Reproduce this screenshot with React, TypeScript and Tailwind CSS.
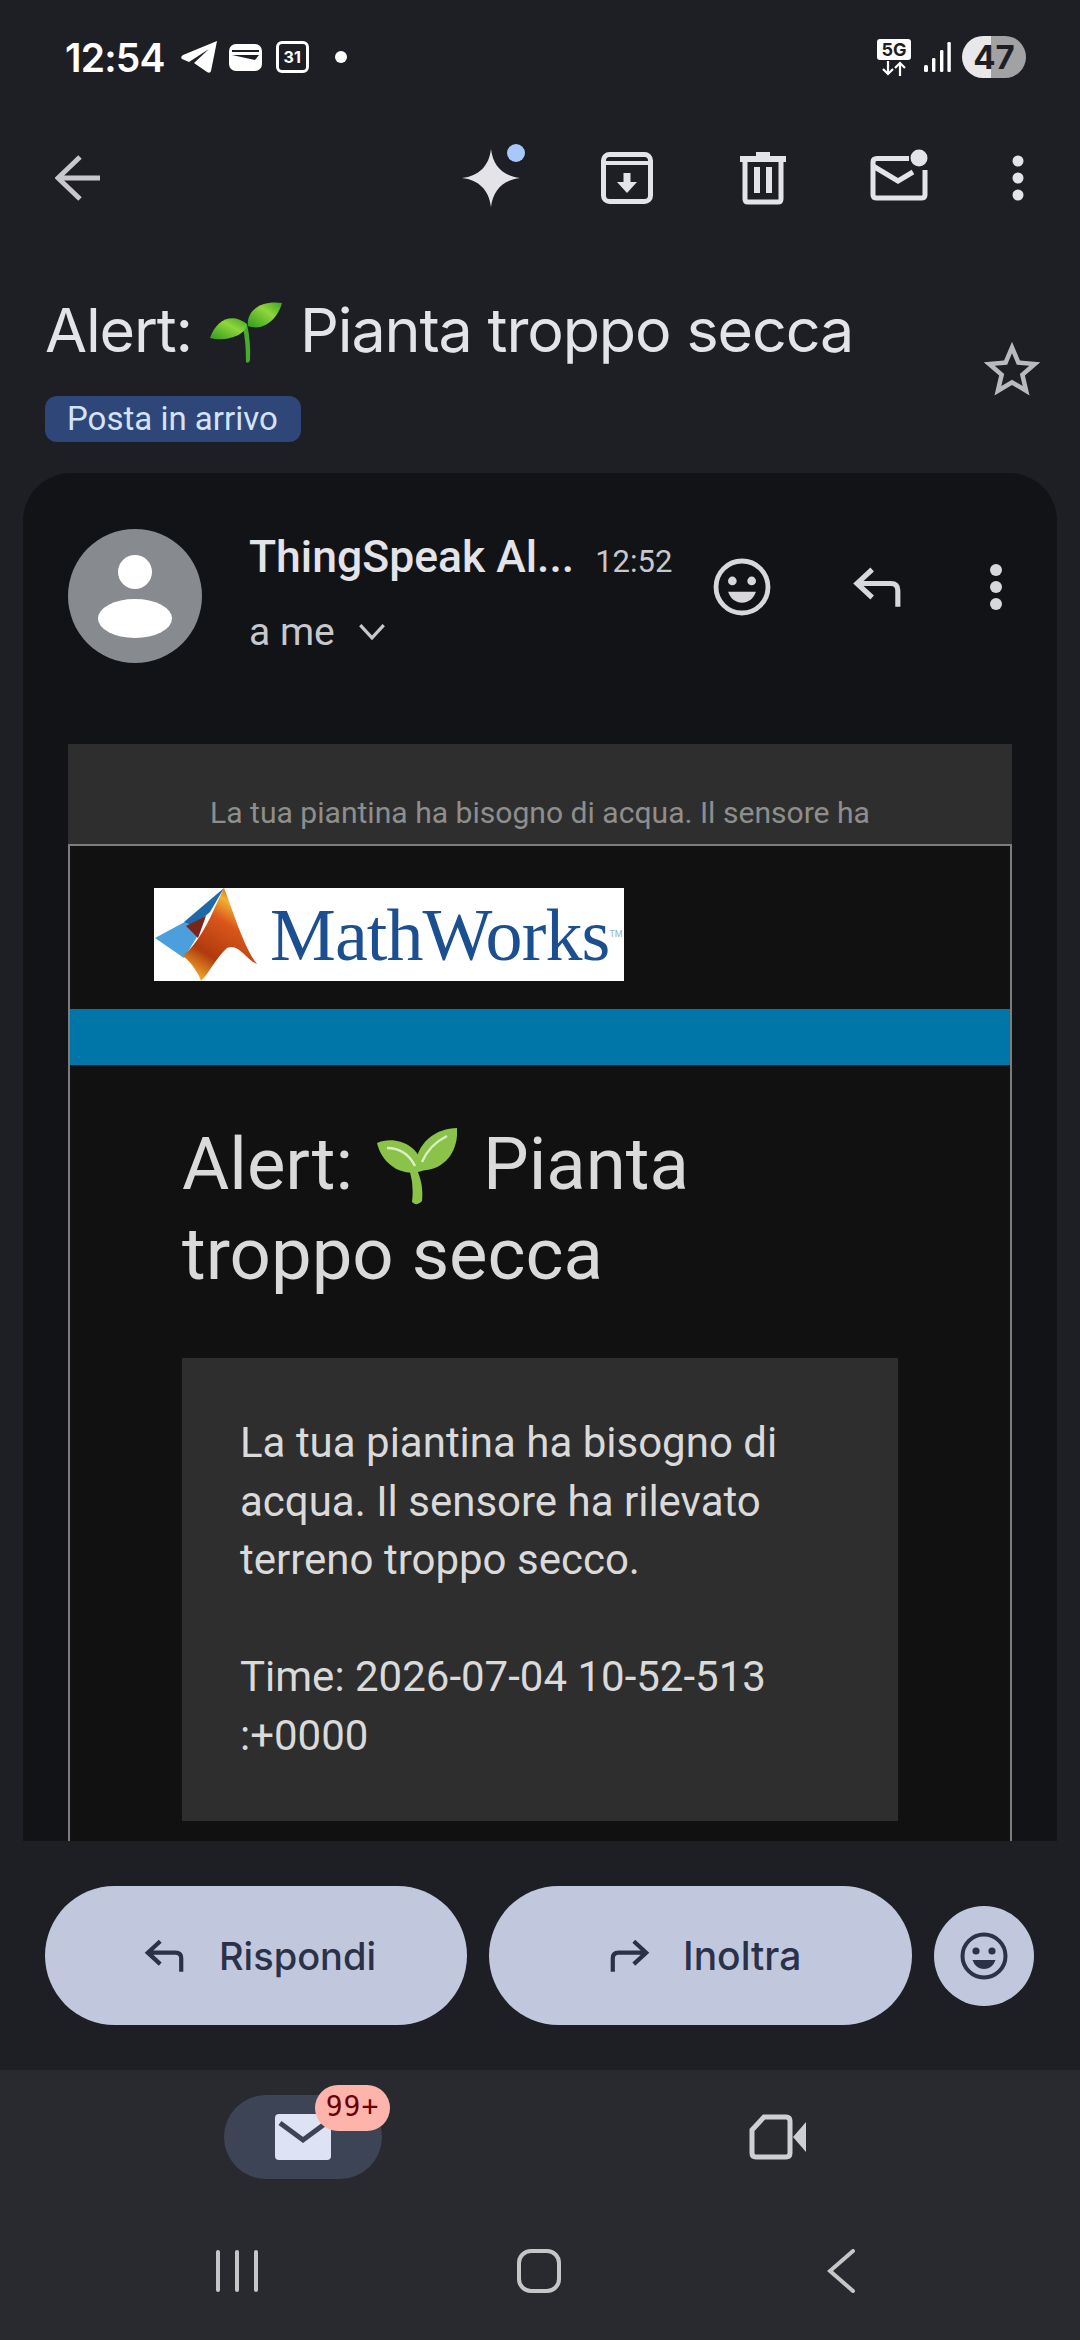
import React from "react";

const roboto = "font-['Roboto',sans-serif]";
const inter = "font-['Inter',sans-serif]";

function ReplyIcon({ className }: { className: string }) {
  return (
    <svg viewBox="0 0 44 36" fill="none" stroke="currentColor" strokeWidth="4.4" className={className}>
      <path d="M17 3 L4 15 L17 27 M4 15 H33 Q39 15 39 21 V35" />
    </svg>
  );
}

function Smile({ className }: { className: string }) {
  return (
    <svg viewBox="0 0 48 48" className={className}>
      <circle cx="24" cy="24" r="21.5" fill="none" stroke="currentColor" strokeWidth="4" />
      <circle cx="16" cy="19" r="3.6" fill="currentColor" />
      <circle cx="32" cy="19" r="3.6" fill="currentColor" />
      <path d="M12.5 28 H35.5 C33.5 34 29 37 24 37 C19 37 14.5 34 12.5 28Z" fill="currentColor" />
    </svg>
  );
}

function Kebab({ r, gap, color }: { r: number; gap: number; color: string }) {
  const c = 32;
  return (
    <svg viewBox="0 0 64 64" className="w-[64px] h-[64px]">
      <circle cx={c} cy={c - gap} r={r} fill={color} />
      <circle cx={c} cy={c} r={r} fill={color} />
      <circle cx={c} cy={c + gap} r={r} fill={color} />
    </svg>
  );
}

function SproutDark() {
  return (
    <svg viewBox="0 0 72 64" className="inline-block w-[72px] h-[64px] align-[-12px] mx-[18px]">
      <defs>
        <linearGradient id="lf1" x1="0" y1="1" x2="1" y2="0">
          <stop offset="0" stopColor="#2f9a1e" />
          <stop offset="0.6" stopColor="#8fd63a" />
          <stop offset="1" stopColor="#3ca524" />
        </linearGradient>
      </defs>
      <path d="M37 24 Q41 42 40 60 Q39 64 36 62 Q36 42 33 28Z" fill="#47ab2b" />
      <path d="M0 38 C6 20 22 12 37 24 C36 36 14 42 0 38Z" fill="url(#lf1)" />
      <path d="M38 26 C36 10 52 0 72 3 C68 18 54 32 38 26Z" fill="url(#lf1)" />
    </svg>
  );
}

function SproutLight() {
  return (
    <svg viewBox="0 0 80 77" className="inline-block w-[80px] h-[77px] align-[-16px] ml-[24px] mr-[26px]">
      <path d="M39 40 C45 52 46 62 45 73 Q40 79 35 74 Q37 58 33 44Z" fill="#8bc34a" />
      <path d="M0 15 C16 8 42 14 47 42 C30 50 6 40 0 15Z" fill="#8bc34a" />
      <path d="M80 0 C60 0 38 14 38 42 C62 46 82 28 80 0Z" fill="#8bc34a" />
      <path d="M10 20 C22 20 32 26 38 38 M70 8 C58 14 50 22 45 34" stroke="#dcedc8" strokeWidth="2.5" fill="none" />
    </svg>
  );
}

function MathLogo() {
  return (
    <div className="ml-[84px] mt-[42px] w-[470px] h-[93px] bg-white flex items-center overflow-hidden">
      <svg viewBox="0 0 104 93" className="w-[104px] h-[93px] shrink-0">
        <defs>
          <linearGradient id="mw" x1="0.2" y1="1" x2="0.7" y2="0">
            <stop offset="0" stopColor="#f7b32b" />
            <stop offset="0.28" stopColor="#b03a0e" />
            <stop offset="0.65" stopColor="#d9561a" />
            <stop offset="0.85" stopColor="#f2b233" />
            <stop offset="1" stopColor="#c9521a" />
          </linearGradient>
        </defs>
        <path d="M1 50 L38 30 L46 44 L30 70Z" fill="#4a9fdc" />
        <path d="M70 0 L30 34 L40 38 L56 24Z" fill="#1e6aa8" />
        <path d="M32 38 L52 28 L44 50 Z" fill="#7d2318" />
        <path d="M70 0 C78 20 90 60 103 76 C92 72 85 55 73 60 C62 70 55 85 47 93 C45 85 35 72 29 68 C50 50 60 20 70 0Z" fill="url(#mw)" />
      </svg>
      <span className="ml-[12px] text-[74px] leading-none tracking-[-0.9px] text-[#1c4f8f] font-['Liberation_Serif',serif] whitespace-nowrap">MathWorks</span>
      <span className="text-[9px] leading-none text-[#8fb4d0] self-center shrink-0">TM</span>
    </div>
  );
}

export default function App() {
  return (
    <div className={`w-[1080px] h-[2340px] bg-[#1e1f24] flex flex-col overflow-hidden ${roboto}`}>
      {/* status bar */}
      <div className="h-[114px] shrink-0 flex items-center pl-[65px] pr-[54px] text-white">
        <span className={`${inter} text-[39px] font-semibold tracking-[-0.8px] leading-none`}>12:54</span>
        <svg viewBox="0 0 36 32" className="w-[36px] h-[32px] ml-[16px]" fill="#fff">
          <path d="M36 0 L30 30 Q29 33 26 31 L13 22 L28 8 L8 21 L1 18 Q-1 16 2 14Z" />
        </svg>
        <svg viewBox="0 0 33 27" className="w-[33px] h-[27px] ml-[12px]">
          <rect width="33" height="27" rx="7" fill="#fff" />
          <path d="M3 6 H30 V8 H3Z M3 11 H30 L26 16 L3 11Z" fill="#1e1f24" />
        </svg>
        <div className={`${inter} w-[33px] h-[32px] ml-[14px] border-[3px] border-white rounded-[6px] flex items-center justify-center text-[16px] font-bold leading-none`}>31</div>
        <div className="w-[12px] h-[12px] rounded-full bg-white ml-[26px]" />
        <div className="ml-auto flex flex-col items-center w-[34px]">
          <div className={`${inter} w-[34px] h-[21px] bg-white rounded-[3px] text-[#1e1f24] text-[18px] font-bold leading-[21px] text-center`}>5G</div>
          <svg viewBox="0 0 26 15" className="w-[26px] h-[15px] mt-[1px]" fill="none" stroke="#fff" strokeWidth="2.2">
            <path d="M7 0 V13 M2 8 L7 13 L12 8 M19 15 V2 M14 7 L19 2 L24 7" />
          </svg>
        </div>
        <svg viewBox="0 0 27 30" className="w-[27px] h-[30px] ml-[13px]" fill="#fff">
          <rect x="0" y="23" width="4" height="7" rx="1.5" />
          <rect x="8" y="16" width="3.4" height="14" rx="1.2" />
          <rect x="16" y="8" width="3.4" height="22" rx="1.2" />
          <rect x="23.4" y="0" width="3.4" height="30" rx="1.2" />
        </svg>
        <div className={`${inter} ml-[11px] w-[64px] h-[42px] rounded-full bg-[linear-gradient(to_right,#e8e8ea_45%,#a2a2a4_45%)] flex items-center justify-center text-[#1e1f24] text-[33px] font-bold leading-none`}>47</div>
      </div>

      {/* toolbar */}
      <div className="h-[128px] shrink-0 flex items-center pl-[55px] pr-[11px] text-[#e3e3e8]">
        <svg viewBox="0 0 45 46" className="w-[45px] h-[46px]" fill="none" stroke="#c7c7cc" strokeWidth="5">
          <path d="M25 2 L3 23 L25 44 M3 23 H45" />
        </svg>
        <div className="ml-auto w-[136px] flex justify-center">
          <svg viewBox="0 0 64 64" className="w-[64px] h-[64px] overflow-visible">
            <path d="M32 3 C34 20 44 30 61 32 C44 34 34 44 32 61 C30 44 20 34 3 32 C20 30 30 20 32 3Z" fill="#e3e3e8" />
            <circle cx="57" cy="7" r="9" fill="#a8c7fa" />
          </svg>
        </div>
        <div className="w-[136px] flex justify-center">
          <svg viewBox="0 0 64 64" className="w-[64px] h-[64px]">
            <rect x="8.5" y="8.5" width="47" height="47" rx="6" fill="none" stroke="#e3e3e8" strokeWidth="5" />
            <path d="M8 17 H56" stroke="#e3e3e8" strokeWidth="4" />
            <path d="M28.5 27 H35.5 V36 H42 L32 47 L22 36 H28.5Z" fill="#e3e3e8" />
          </svg>
        </div>
        <div className="w-[136px] flex justify-center">
          <svg viewBox="0 0 64 64" className="w-[64px] h-[64px]" fill="#e3e3e8">
            <path d="M25 6 H39 V10 H55 V16 H9 V10 H25Z" />
            <path d="M14 16 V53 Q14 56 17 56 H47 Q50 56 50 53 V16" fill="none" stroke="#e3e3e8" strokeWidth="5" />
            <rect x="23" y="21" width="6" height="26" />
            <rect x="35" y="21" width="6" height="26" />
          </svg>
        </div>
        <div className="w-[136px] flex justify-center">
          <svg viewBox="0 0 64 64" className="w-[64px] h-[64px]">
            <path d="M42 12.5 H10 Q6 12.5 6 16 V49 Q6 52 10 52 H54 Q58 52 58 49 V24" fill="none" stroke="#e3e3e8" strokeWidth="5" />
            <path d="M6 20 L31 35 L46 26" fill="none" stroke="#e3e3e8" strokeWidth="5" />
            <circle cx="52" cy="12" r="8.5" fill="#e3e3e8" />
          </svg>
        </div>
        <div className="w-[102px] flex justify-center">
          <Kebab r={5.5} gap={17} color="#e3e3e8" />
        </div>
      </div>

      {/* subject */}
      <div className="h-[231px] shrink-0 flex pl-[45px] pr-[34px]">
        <div className="flex flex-col items-start">
          <div className={`${inter} mt-[48px] h-[80px] text-[61px] leading-[80px] text-[#e3e3e8] tracking-[-1.15px] whitespace-nowrap`}>
            Alert:<SproutDark />Pianta troppo secca
          </div>
          <div className="mt-[26px] h-[46px] w-[256px] rounded-[12px] bg-[#2f4678] text-[#d3e3fd] text-[33px] leading-[46px] pl-[22px] whitespace-nowrap">Posta in arrivo</div>
        </div>
        <svg viewBox="0 0 24 24" className="w-[68px] h-[68px] ml-auto mt-[94px]" fill="#b9b9be">
          <path d="M22 9.24l-7.19-.62L12 2 9.19 8.63 2 9.24l5.46 4.73L5.82 21 12 17.27 18.18 21l-1.63-7.03L22 9.24zM12 15.4l-3.76 2.27 1-4.28-3.32-2.88 4.38-.38L12 6.1l1.71 4.04 4.38.38-3.32 2.88 1 4.28L12 15.4z" />
        </svg>
      </div>

      {/* message card */}
      <div className="h-[1368px] shrink-0 mx-[23px] rounded-t-[48px] bg-[#121317] overflow-hidden px-[45px] pt-[56px]">
        <div className="h-[134px] flex">
          <div className="w-[134px] h-[134px] rounded-full bg-[#878b90] flex flex-col items-center shrink-0">
            <div className="w-[34px] h-[34px] rounded-full bg-white mt-[26px]" />
            <div className="w-[74px] h-[39px] rounded-[50%] bg-white mt-[10px]" />
          </div>
          <div className="ml-[47px] w-[440px] shrink-0">
            <div className="flex items-baseline h-[56px] whitespace-nowrap">
              <span className="text-[44.5px] leading-[56px] text-[#e3e3e8] font-medium">ThingSpeak Al...</span>
              <span className="ml-[21px] text-[31px] text-[#c7c7cc]">12:52</span>
            </div>
            <div className="flex items-center mt-[25px] text-[#c7c7cc]">
              <span className="text-[39px] leading-[44px]">a me</span>
              <svg viewBox="0 0 24 15" className="w-[26px] h-[16px] ml-[24px]" fill="none" stroke="currentColor" strokeWidth="3">
                <path d="M1 1 L12 13 L23 1" />
              </svg>
            </div>
          </div>
          <div className="flex items-start pt-[29px] text-[#d7d7dc]">
            <Smile className="w-[58px] h-[58px] ml-[24px]" />
            <ReplyIcon className="w-[52px] h-[42px] ml-[81px] mt-[8px]" />
            <div className="ml-[60px] -mt-[3px]">
              <Kebab r={6} gap={17} color="#d7d7dc" />
            </div>
          </div>
        </div>

        {/* email */}
        <div className="mt-[81px]">
          <div className="h-[100px] bg-[#2e2e2e] text-[#8e8e8e] text-[30.1px] text-center pt-[49px] leading-[40px] whitespace-nowrap">La tua piantina ha bisogno di acqua. Il sensore ha</div>
          <div className="border-2 border-[#7c7c7c] bg-[#111111] h-[1000px]">
            <MathLogo />
            <div className="mt-[28px] h-[56px] bg-[#0076a8]" />
            <div className="mt-[55px] ml-[112px] w-[640px] text-[72.5px] leading-[90px] text-[#dadada]">
              Alert:<SproutLight />Pianta<br />troppo secca
            </div>
            <div className="mt-[58px] ml-[112px] w-[716px] h-[463px] bg-[#2e2e2e] pt-[56px] px-[58px] text-[42px] leading-[58.5px] text-[#dadada]">
              <p>La tua piantina ha bisogno di acqua. Il sensore ha rilevato terreno troppo secco.</p>
              <p className="mt-[58.5px]">Time: 2026-07-04 10-52-513 :+0000</p>
            </div>
          </div>
        </div>
      </div>

      {/* actions */}
      <div className={`h-[229px] shrink-0 flex items-center pl-[45px] text-[#2b3149] ${inter}`}>
        <div className="w-[422px] h-[139px] rounded-full bg-[#c1c8de] flex items-center pl-[99px]">
          <ReplyIcon className="w-[42px] h-[35px]" />
          <span className="ml-[33px] text-[38px] font-medium leading-none">Rispondi</span>
        </div>
        <div className="ml-[22px] w-[423px] h-[139px] rounded-full bg-[#c1c8de] flex items-center pl-[119px]">
          <ReplyIcon className="w-[42px] h-[35px] -scale-x-100" />
          <span className="ml-[33px] text-[39px] font-medium leading-none">Inoltra</span>
        </div>
        <div className="ml-[22px] w-[100px] h-[100px] rounded-full bg-[#c1c8de] flex items-center justify-center">
          <Smile className="w-[48px] h-[48px]" />
        </div>
      </div>

      {/* bottom nav */}
      <div className="h-[270px] shrink-0 bg-[#292a2f]">
        <div className="h-[134px] grid grid-cols-2 px-[66px] items-center justify-items-center">
          <div className="relative w-[158px] h-[84px] rounded-full bg-[#3d4456] flex items-center justify-center">
            <svg viewBox="0 0 56 46" className="w-[56px] h-[46px]">
              <rect width="56" height="46" rx="4" fill="#dde2f5" />
              <path d="M5 9 L28 26 L51 9" fill="none" stroke="#3d4456" strokeWidth="5" />
            </svg>
            <div className="absolute left-[91px] -top-[10px] w-[75px] h-[46px] rounded-full bg-[#ffb4ab] text-[#690005] text-[28px] leading-[44px] text-center font-['DejaVu_Sans_Mono',monospace] tracking-[1px]">99+</div>
          </div>
          <svg viewBox="0 0 57 46" className="w-[57px] h-[46px]">
            <path d="M3 16 L15 3 H37 Q41 3 41 7 V39 Q41 43 37 43 H7 Q3 43 3 39Z" fill="none" stroke="#cfcfd3" strokeWidth="5" />
            <path d="M44 23 L57 8 V38Z" fill="#cfcfd3" />
          </svg>
        </div>
        <div className="h-[136px] grid grid-cols-3 pl-[86px] pr-[88px] justify-items-center">
          <div className="flex gap-[15px] mt-[46px] h-[42px]">
            <div className="w-[4px] bg-[#c6c6c8] rounded-full" />
            <div className="w-[4px] bg-[#c6c6c8] rounded-full" />
            <div className="w-[4px] bg-[#c6c6c8] rounded-full" />
          </div>
          <div className="w-[44px] h-[44px] mt-[45px] rounded-[14px] border-[4px] border-[#c6c6c8]" />
          <svg viewBox="0 0 28 44" className="w-[28px] h-[44px] mt-[45px]" fill="none" stroke="#c6c6c8" strokeWidth="4" strokeLinecap="round">
            <path d="M26 2 L3 22 L26 42" />
          </svg>
        </div>
      </div>
    </div>
  );
}
